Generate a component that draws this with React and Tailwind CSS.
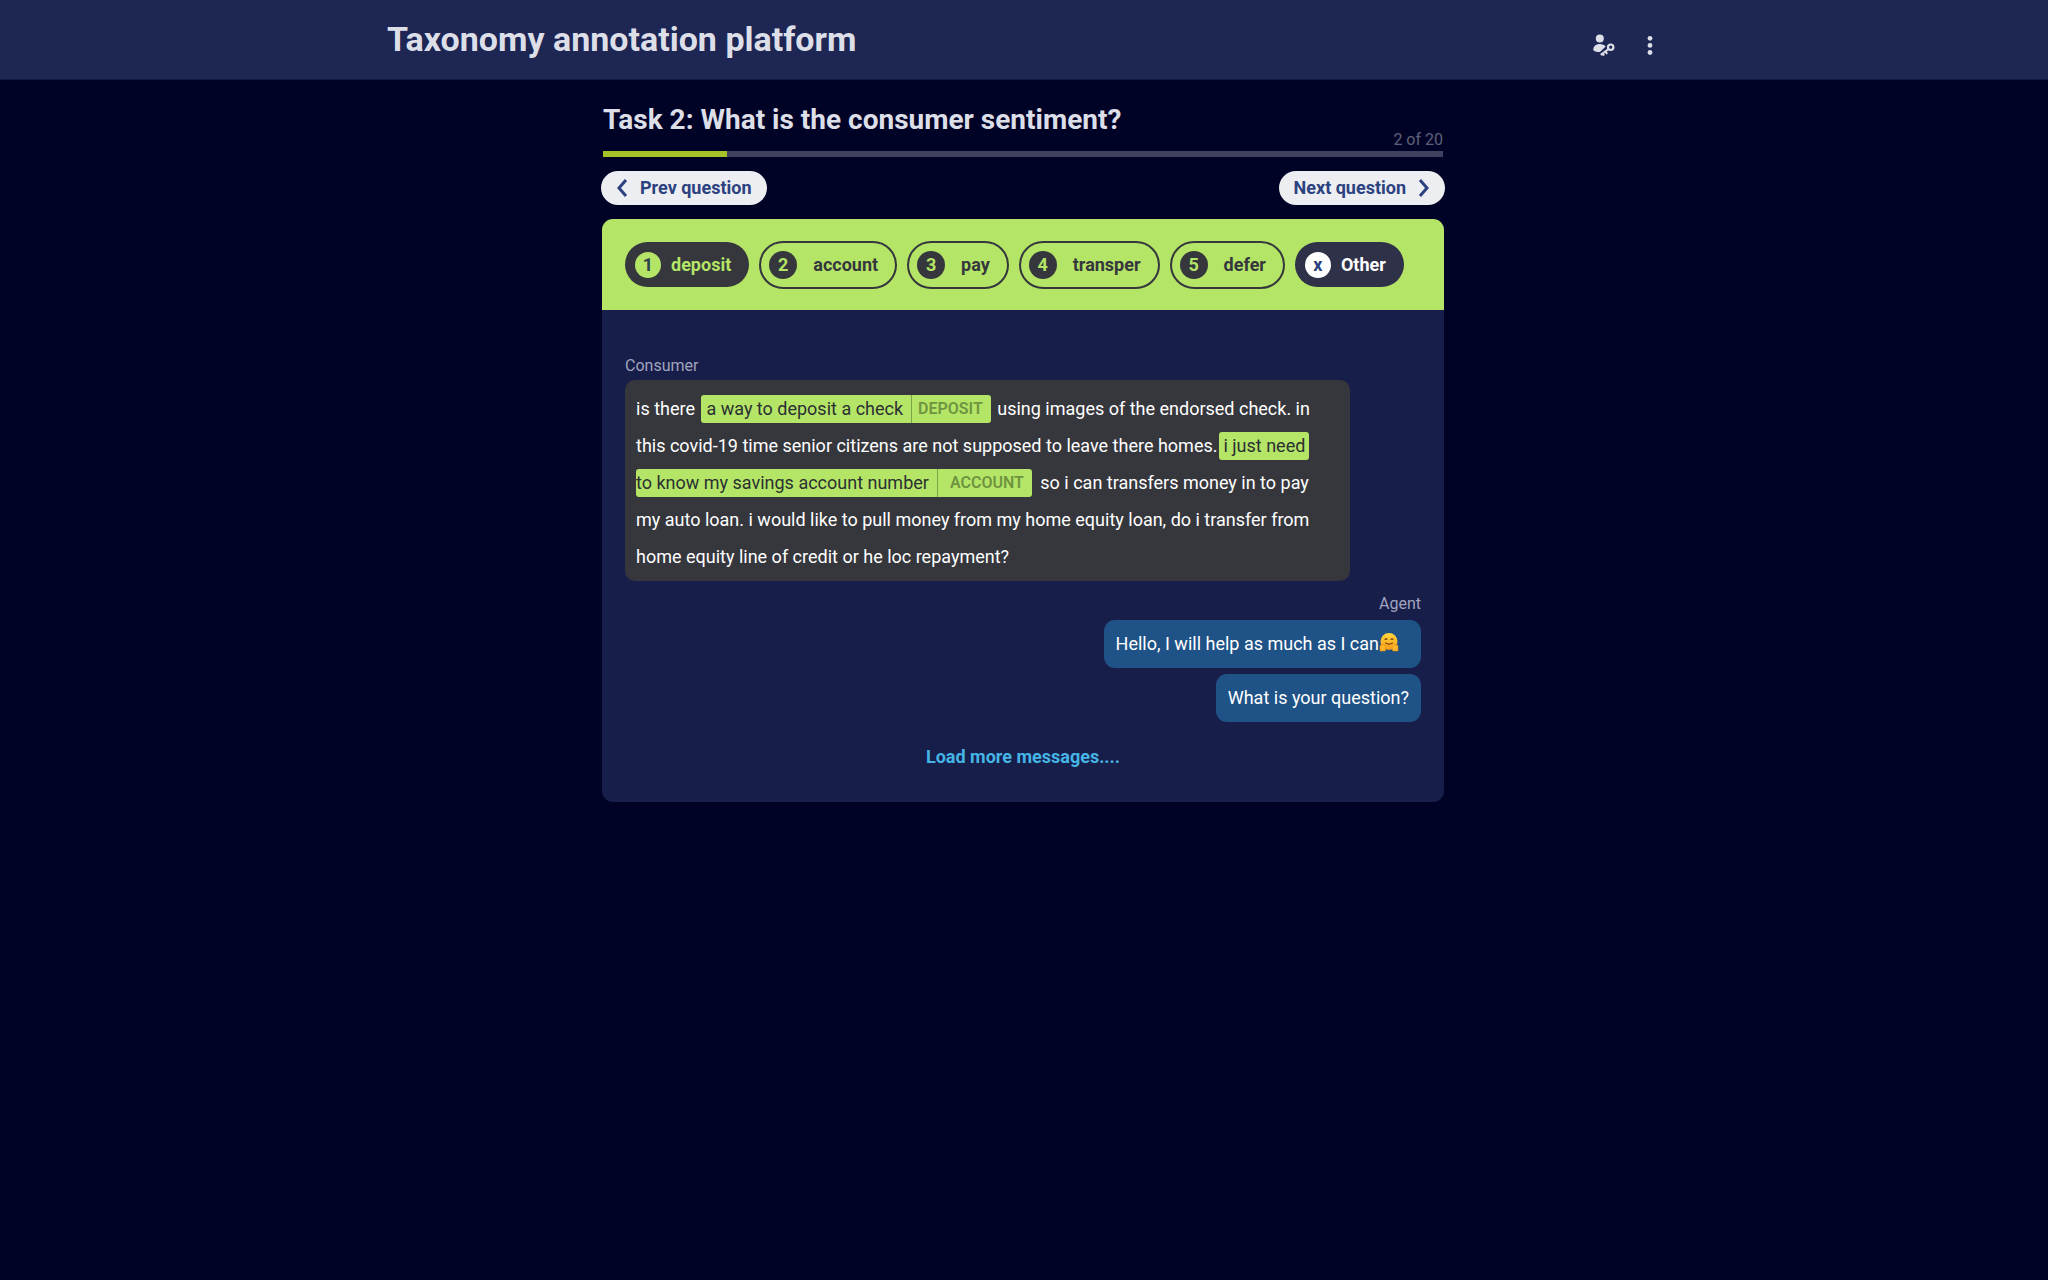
import React from "react";

const TAGS = [
  { key: "1", label: "deposit", kind: "active" },
  { key: "2", label: "account", kind: "outline" },
  { key: "3", label: "pay", kind: "outline" },
  { key: "4", label: "transper", kind: "outline" },
  { key: "5", label: "defer", kind: "outline" },
  { key: "x", label: "Other", kind: "other" },
];

const PILL = {
  active: "h-[45px] gap-2.5 bg-[#36373d] pl-2.5 pr-[18px] text-[#b4e567]",
  outline: "h-12 gap-4 border-2 border-[#36373d] pl-2 pr-[17px] text-[#36373d]",
  other: "h-[45px] gap-2.5 bg-[#2e3148] pl-2.5 pr-[18px] text-white",
};

const DOT = {
  active: "size-[26px] bg-[#b4e567] text-[#2d4250]",
  outline: "size-7 bg-[#36373d] text-[#b4e567]",
  other: "size-[26px] bg-white text-[#2a3f7e]",
};

function Tag({ tag }) {
  return (
    <button type="button" className={`flex items-center rounded-full ${PILL[tag.kind]}`}>
      <span className={`flex items-center justify-center rounded-full ${DOT[tag.kind]}`}>{tag.key}</span>
      {tag.label}
    </button>
  );
}

function UserKeyIcon() {
  return (
    <svg viewBox="0 0 22 22" className="size-[22px]" fill="currentColor" aria-hidden="true">
      <circle cx="6.8" cy="4.6" r="4" />
      <path d="M0.3 15.3C0.3 12 3.2 9.9 6.6 9.9c2.7 0 5 1 6.1 2.7L7 17.9C3.4 18.3.3 17.6.3 15.3Z" />
      <circle cx="17.7" cy="13.2" r="2.7" fill="none" stroke="currentColor" strokeWidth="2.2" />
      <path d="M15.7 15 7.7 20.8M12.4 17.4l1.7 2.6M9.4 19.3l1.6 2.3" fill="none" stroke="currentColor" strokeWidth="2.1" />
    </svg>
  );
}

function Chevron({ d }) {
  return (
    <svg viewBox="0 0 12 20" className="h-5 w-3" fill="none" stroke="currentColor" strokeWidth="3" aria-hidden="true">
      <path d={d} />
    </svg>
  );
}

function HugEmoji() {
  return (
    <svg viewBox="0 0 20 20" className="mr-2.5 inline-block size-5 align-[-2px]" role="img" aria-label="Hugging face">
      <defs>
        <linearGradient id="face" x1="0" y1="0" x2="0" y2="1">
          <stop offset="0" stopColor="#ffd93b" />
          <stop offset="1" stopColor="#f89a1c" />
        </linearGradient>
      </defs>
      <circle cx="10" cy="9.5" r="8.5" fill="url(#face)" />
      <path d="M5.8 7.8q1.2-2.4 2.4 0M11.8 7.8q1.2-2.4 2.4 0" fill="none" stroke="#6b3a0c" strokeWidth="1.3" />
      <path d="M6.2 10.8q3.8 2.6 7.6 0" fill="none" stroke="#7a3d0c" strokeWidth="1.3" />
      <path d="M1 19V14q.5-1.6 1.6-.6l1.2-1q1.4-.5 1.3 1l1.2.1q1 .7.5 2.2L6.2 19Z" fill="#fdb62b" stroke="#e58a13" strokeWidth=".6" />
      <path d="M19 19V14q-.5-1.6-1.6-.6l-1.2-1q-1.4-.5-1.3 1l-1.2.1q-1 .7-.5 2.2L13.8 19Z" fill="#fdb62b" stroke="#e58a13" strokeWidth=".6" />
    </svg>
  );
}

function Mark({ children, tag, className }) {
  return (
    <mark className={`inline-flex h-7 items-center rounded-[3px] bg-[#b4e567] leading-7 text-[#2b3032] ${className}`}>
      {children}
      {tag}
    </mark>
  );
}

function MarkTag({ children, className }) {
  return (
    <span className={`ml-2 flex h-7 items-center border-l border-[#7fa348] pr-2 text-base font-semibold text-[#6f9440] ${className}`}>
      {children}
    </span>
  );
}

function AgentBubble({ children }) {
  return <p className="rounded-[11px] bg-[#1f5286] px-3 py-2.5 leading-7 text-white">{children}</p>;
}

export default function App() {
  return (
    <div className="min-h-screen bg-[#010326] font-['Roboto',sans-serif] text-lg">
      <header className="h-20 border-b border-[#131a48] bg-[#1e2654] text-[#dddfe8]">
        <div className="mx-auto flex max-w-[1274px] justify-between">
          <h1 className="pt-[19px] text-[34px] leading-10 font-bold">Taxonomy annotation platform</h1>
          <div className="flex gap-6 pt-[34px]">
            <button type="button" aria-label="Account access" className="h-[22px]">
              <UserKeyIcon />
            </button>
            <button type="button" aria-label="More options" className="h-[22px] px-2">
              <svg viewBox="0 0 6 22" className="h-[22px] w-1.5" fill="currentColor" aria-hidden="true">
                <circle cx="3" cy="4.3" r="2.4" />
                <circle cx="3" cy="11.4" r="2.4" />
                <circle cx="3" cy="18.5" r="2.4" />
              </svg>
            </button>
          </div>
        </div>
      </header>

      <main className="mx-auto max-w-[846px] pt-6 pr-0.5">
        <div className="flex items-end justify-between px-0.5">
          <h2 className="pb-[15px] text-[28px] leading-8 font-bold text-[#dddfe8]">
            Task 2: What is the consumer sentiment?
          </h2>
          <span className="text-base leading-[22px] text-[#5e6079]">2 of 20</span>
        </div>
        <div className="mx-0.5 h-1.5 bg-[#3f405f]" role="progressbar" aria-valuemin={0} aria-valuemax={20} aria-valuenow={2} aria-label="Question progress">
          <div className="h-full w-[124px] bg-[#a5c327]" />
        </div>
        <nav className="mt-3.5 flex justify-between font-bold text-[#2c417f]">
          <button type="button" className="flex h-[34px] items-center gap-3 rounded-full bg-[#eceef1] px-[15px]">
            <Chevron d="M10 2 3 10l7 8" />
            Prev question
          </button>
          <button type="button" className="flex h-[34px] items-center gap-3 rounded-full bg-[#eceef1] px-[15px]">
            Next question
            <Chevron d="M2 2l7 8-7 8" />
          </button>
        </nav>

        <section className="mx-px mt-3.5 overflow-hidden rounded-[11px] bg-[#181e4a]">
          <div className="flex h-[91px] items-center gap-2.5 bg-[#b4e567] px-[23px] font-bold">
            {TAGS.map((tag) => (
              <Tag key={tag.key} tag={tag} />
            ))}
          </div>
          <div className="flex flex-col px-[23px] pt-11 pb-[29px]">
            <span className="text-base leading-6 text-[#a0a4be]">Consumer</span>
            <p className="mt-0.5 w-[725px] max-w-full rounded-[10px] bg-[#36373d] px-[11px] pt-2.5 pb-1.5 leading-[37px] text-white">
              is there{" "}
              <Mark className="mx-0.5 pl-[5px]" tag={<MarkTag className="pl-1.5">DEPOSIT</MarkTag>}>a way to deposit a check</Mark>{" "}
              using images of the endorsed check. in
              <br />
              this covid-19 time senior citizens are not supposed to leave there homes.
              <Mark className="ml-0.5 px-1">i just need</Mark>
              <br />
              <Mark className="mr-1" tag={<MarkTag className="pl-3">ACCOUNT</MarkTag>}>to know my savings account number</Mark>{" "}
              so i can transfers money in to pay
              <br />
              my auto loan. i would like to pull money from my home equity loan, do i transfer from
              <br />
              home equity line of credit or he loc repayment?
            </p>
            <div className="mt-[13px] flex flex-col items-end gap-1.5">
              <span className="text-base leading-5 text-[#a0a4be]">Agent</span>
              <AgentBubble>
                Hello, I will help as much as I can
                <HugEmoji />
              </AgentBubble>
              <AgentBubble>What is your question?</AgentBubble>
            </div>
            <button type="button" className="mt-[19px] self-center leading-8 font-bold text-[#45b5e6]">
              Load more messages....
            </button>
          </div>
        </section>
      </main>
    </div>
  );
}
